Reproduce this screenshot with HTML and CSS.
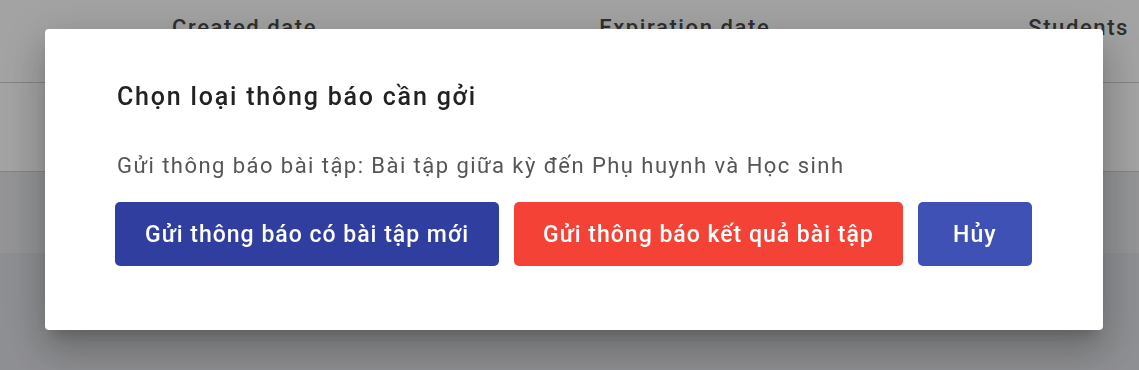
FILE: index.html
```html
<!DOCTYPE html>
<html lang="vi">
    <head>
        <meta charset="UTF-8">
        <meta name="viewport" content="width=device-width, initial-scale=1.0">
        <title>Bài tập</title>
        <link rel="stylesheet" href="styles.css">
    </head>

    <body>
        <div class="table">
            <div class="table-head">
                <span class="col col-created">Created date</span>
                <span class="col col-expire">Expiration date</span>
                <span class="col col-students">Students</span>
            </div>
            <div class="table-row"></div>
            <div class="table-rest">
                <div class="band"></div>
                <div class="band band-alt"></div>
            </div>
        </div>

        <div class="backdrop">
            <div class="dialog">
                <h2 class="dialog-title">Chọn loại thông báo cần gởi</h2>
                <p class="dialog-text">Gửi thông báo bài tập: Bài tập giữa kỳ đến Phụ huynh và Học sinh</p>
                <div class="dialog-actions">
                    <button class="btn btn-primary">Gửi thông báo có bài tập mới</button>
                    <button class="btn btn-danger">Gửi thông báo kết quả bài tập</button>
                    <button class="btn btn-cancel">Hủy</button>
                </div>
            </div>
        </div>
    </body>

</html>
```

FILE: styles.css
```css
* {
    margin: 0;
    padding: 0;
    box-sizing: border-box;
    font-family: Roboto, 'Liberation Sans', sans-serif;
}

body {
    width: 1139px;
    height: 370px;
    overflow: hidden;
    background: #e4e6ec;
}

.table {
    display: flex;
    flex-direction: column;
    height: 100%;
}

.table-head {
    height: 83px;
    background: #fff;
    border-bottom: 1px solid #d0d0d0;
    display: flex;
    align-items: flex-start;
    padding-top: 15px;

    & .col {
        font-size: 22px;
        font-weight: 500;
        letter-spacing: 1.6px;
        color: #4a4a4a;
        white-space: nowrap;
    }

    & .col-created {
        margin-left: 172px;
    }

    & .col-expire {
        margin-left: 282px;
    }

    & .col-students {
        margin-left: auto;
        margin-right: 10px;
    }
}

.table-row {
    height: 89px;
    background: #fff;
    border-bottom: 1px solid #d0d0d0;
}

.table-rest {
    flex: 1;
    display: flex;
    flex-direction: column;

    & .band {
        height: 81px;
        background: #e7e8ec;
    }

    & .band-alt {
        flex: 1;
        background: #dfe0e5;
    }
}

/* nền mờ phía sau hộp thoại */
.backdrop {
    position: fixed;
    inset: 0;
    background: rgba(0, 0, 0, 0.36);
    padding: 29px 0 0 45px;
}

.dialog {
    width: 1058px;
    height: 301px;
    background: #fff;
    border-radius: 4px;
    padding: 52px 70px 0 70px;
    box-shadow: 0 11px 15px -7px rgba(0, 0, 0, 0.2),
        0 24px 38px 3px rgba(0, 0, 0, 0.14),
        0 9px 46px 8px rgba(0, 0, 0, 0.12);
}

.dialog-title {
    font-size: 25px;
    line-height: 32px;
    font-weight: 500;
    letter-spacing: 1.8px;
    color: #222;
    margin-left: 2px;
}

.dialog-text {
    font-size: 22px;
    line-height: 30px;
    letter-spacing: 1.45px;
    color: #555;
    margin: 38px 0 0 2px;
}

.dialog-actions {
    display: flex;
    gap: 15px;
    margin-top: 21px;
}

.btn {
    flex-shrink: 0;
    height: 64px;
    padding: 0 30px;
    border: none;
    border-radius: 5px;
    font-size: 23px;
    font-weight: 500;
    letter-spacing: 1px;
    white-space: nowrap;
    color: #fff;
    cursor: pointer;
}

.btn-primary {
    background: #303f9f;
}

.btn-danger {
    background: #f44336;
    padding: 0 29px;
}

.btn-cancel {
    background: #3f51b5;
    min-width: 114px;
}
```
